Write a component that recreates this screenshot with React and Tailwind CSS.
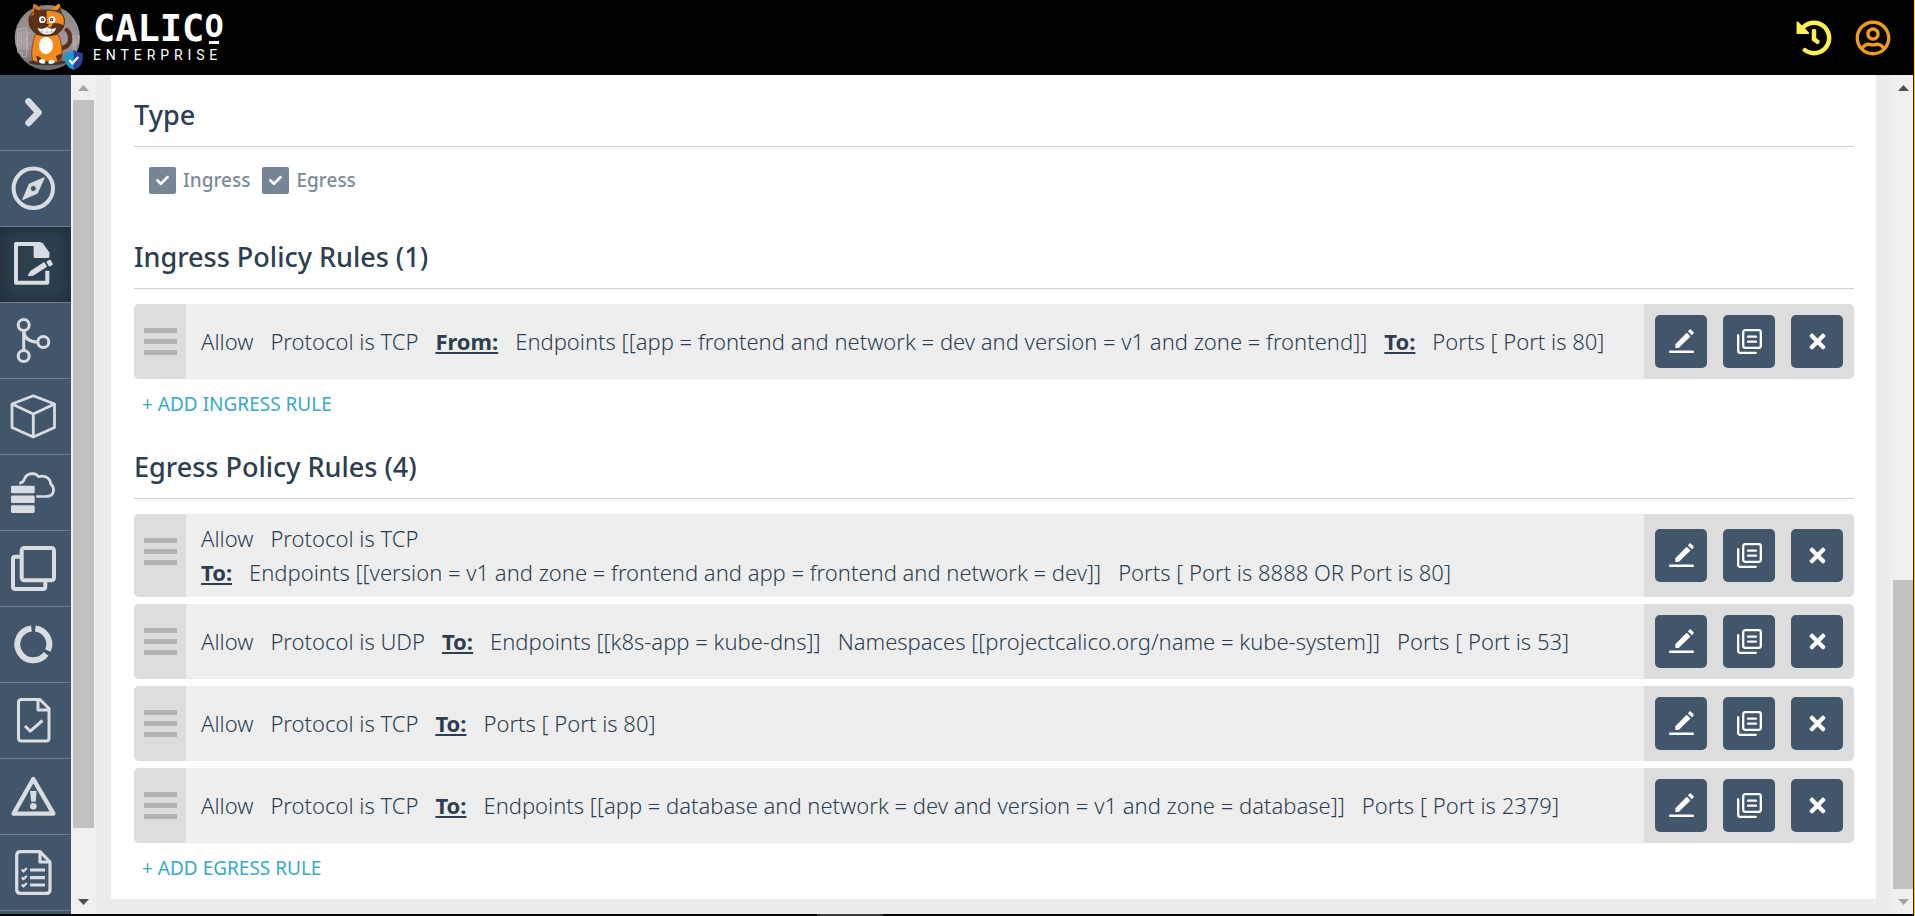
import { FaCheck, FaHistory, FaRegUserCircle, FaTimes } from "react-icons/fa";

function NavSvg({ children }) {
  return (
    <svg
      viewBox="0 0 48 48"
      className="size-12"
      fill="none"
      stroke="currentColor"
      strokeLinejoin="round"
      aria-hidden="true"
    >
      {children}
    </svg>
  );
}

const NAV_ITEMS = [
  {
    label: "Expand menu",
    icon: <path d="M19.5 12.5 29.5 23.5 19.5 34" strokeWidth="6.5" strokeLinecap="round" />,
  },
  {
    label: "Dashboard",
    icon: (
      <>
        <circle cx="24.3" cy="23.3" r="19.7" strokeWidth="4" />
        <path
          fill="currentColor"
          fillRule="evenodd"
          strokeWidth="1"
          d="M35.3 12.7 20.3 19 13.7 34.6 28.3 28.3ZM24.3 20.6a3 3 0 1 1 0 6 3 3 0 1 1 0-6Z"
        />
      </>
    ),
  },
  {
    label: "Policies",
    active: true,
    icon: (
      <>
        <path d="M26.5 3H7V41.7H38.3V29.7" strokeWidth="4" />
        <path
          fill="currentColor"
          stroke="none"
          d="M24.6 1H30.5Q32.5 1 34 2.5L40.4 11.5V16.5L39 17H26Q24.6 17 24.6 15.5Z"
        />
        <path
          fill="currentColor"
          strokeWidth="1"
          d="M19.3 34.6 21.6 30.2 35.2 21.6 37.6 25.6 24.3 34.2ZM37.8 20.8 41.2 19 43.6 23.4 40.3 25.2Z"
        />
      </>
    ),
  },
  {
    label: "Service graph",
    icon: (
      <g strokeWidth="3">
        <circle cx="14.7" cy="8" r="5.5" />
        <circle cx="14.7" cy="39" r="5.5" />
        <circle cx="34.3" cy="25" r="5.5" />
        <path d="M14.7 13.5V33.5M14.7 14C15.5 21.5 20 25 28.5 25" />
      </g>
    ),
  },
  {
    label: "Endpoints",
    icon: (
      <path
        strokeWidth="2.8"
        d="M24.3 2.7 45.5 11V34.5L24.3 44 3 34.5V11ZM3 11 24.3 21 45.5 11M24.3 21V44"
      />
    ),
  },
  {
    label: "Network sets",
    icon: (
      <>
        <g fill="currentColor" stroke="none">
          <rect x="2" y="16.7" width="23.7" height="7.6" rx="1.3" />
          <rect x="2" y="26.5" width="23.7" height="7.6" rx="1.3" />
          <rect x="2" y="36.3" width="23.7" height="7.6" rx="1.3" />
        </g>
        <path
          strokeWidth="2.7"
          d="M10.3 14.4Q14.5 13.5 15.5 9.8C17 5.8 20 4.7 24 4.7Q27.5 5 29.5 7.8Q33 6.5 36.5 7.8Q41.5 10 41.5 14.5Q45 18 44.5 22C44 26 41 27.5 37 27.5H27.3"
        />
      </>
    ),
  },
  {
    label: "Managed clusters",
    icon: (
      <g strokeWidth="4">
        <rect x="12.7" y="3" width="32.3" height="32.3" rx="2.5" />
        <path d="M11 11.7H6.5Q4 11.7 4 14V41.5Q4 44 6.5 44H34Q36.3 44 36.3 41.5V36" />
      </g>
    ),
  },
  {
    label: "Timeline",
    icon: (
      <path
        strokeWidth="6"
        d="M26.3 7.4A16 16 0 0 1 39 29.6M37.1 32.9A16 16 0 1 1 22.4 7.4"
      />
    ),
  },
  {
    label: "Compliance",
    icon: (
      <g strokeWidth="3">
        <path d="M12.5 2.5H31L40 11.5V41Q40 44 37 44H12.5Q9.5 44 9.5 41V5.5Q9.5 2.5 12.5 2.5ZM29 3V13H40" />
        <path d="M16 29 21.3 34.2 33.5 23.5" />
      </g>
    ),
  },
  {
    label: "Alerts",
    icon: (
      <>
        <path d="M24.3 6 4.6 40.6H44.4Z" strokeWidth="4.4" />
        <path fill="currentColor" stroke="none" d="M21 18H27.7L26.7 28.8H22.2Z" />
        <circle cx="24.3" cy="33.3" r="3.3" fill="currentColor" stroke="none" />
      </>
    ),
  },
  {
    label: "Reports",
    icon: (
      <>
        <path
          strokeWidth="3.2"
          d="M11.5 2.6H31L41 13V40.5Q41 44.4 37.5 44.4H11.5Q7.7 44.4 7.7 40.5V6.5Q7.7 2.6 11.5 2.6ZM31 3V13H41"
        />
        <path strokeWidth="3.2" d="M21 21H36M21 28.7H36M21 36H36" />
        <path
          strokeWidth="2.2"
          d="M12.8 20.5 14.5 22.5 17.8 19M12.8 28.2 14.5 30.2 17.8 26.7M12.8 35.5 14.5 37.5 17.8 34"
        />
      </>
    ),
  },
];

function CatLogo() {
  return (
    <svg viewBox="40 0 216 225" className="h-[75px] w-[72px]" aria-hidden="true">
      <defs>
        <linearGradient id="disc" x1="0" y1="0" x2="0" y2="1">
          <stop offset="0" stopColor="#8d8486" />
          <stop offset="0.6" stopColor="#9f9799" />
          <stop offset="1" stopColor="#6b6365" />
        </linearGradient>
        <clipPath id="head">
          <path d="M88 60C88 38 108 30 141 30S194 38 194 62C196 90 172 108 141 108S87 90 88 60ZM94 46 102 12Q104 9 110 14L132 32ZM188 46 180 12Q178 9 172 14L150 32Z" />
        </clipPath>
      </defs>
      <circle cx="143" cy="113" r="98" fill="url(#disc)" />
      <g fill="none" stroke="#c9c3c4" strokeWidth="2">
        <path d="M54 158V90L80 82V170H68V158ZM60 96V150M66 94V150M73 92V150M84 150V98H92M222 150V108H236V130M228 116V150" />
      </g>
      <ellipse cx="143" cy="187" rx="56" ry="9" fill="#3d3536" />
      <path d="M186 145Q214 138 211 112Q210 96 201 90" fill="none" stroke="#5a3118" strokeWidth="13" strokeLinecap="round" />
      <path d="M106 104Q92 150 98 178Q104 192 140 184Q178 192 186 176Q192 142 176 104Z" fill="#f58a1a" stroke="#5a2d10" strokeWidth="2" />
      <path d="M174 184Q188 178 187 160L168 168Z" fill="#5a3118" />
      <path d="M110 168Q120 166 134 186L114 187Z" fill="#5a3118" />
      <ellipse cx="139" cy="136" rx="21" ry="26" fill="#fff" />
      <path d="M118 186Q118 176 127 178Q136 176 137 190Q126 194 118 186ZM146 190Q146 178 156 179Q166 180 165 188Q154 194 146 190Z" fill="#fff" />
      <g clipPath="url(#head)">
        <rect x="80" y="0" width="62" height="115" fill="#5a3118" />
        <rect x="141" y="0" width="60" height="115" fill="#f58a1a" />
        <path d="M166 34Q182 28 184 8L200 20V54Q190 40 166 34Z" fill="#5a3118" />
        <path d="M160 70Q176 66 196 78V112H141V90Q156 84 160 70Z" fill="#5a3118" />
        <path d="M100 12Q108 8 130 32Q112 32 94 50Z" fill="#d9761b" />
        <path d="M103 24 120 34 104 42Z" fill="#5a3118" />
      </g>
      <path d="M88 60C88 38 108 30 141 30S194 38 194 62C196 90 172 108 141 108S87 90 88 60Z" fill="none" stroke="#4a2610" strokeWidth="3" />
      <circle cx="128" cy="59" r="10" fill="#fff" />
      <circle cx="157" cy="59" r="10" fill="#fff" />
      <circle cx="129" cy="59" r="5" fill="#222" />
      <circle cx="156" cy="59" r="5" fill="#222" />
      <circle cx="129" cy="59" r="2" fill="#fff" />
      <circle cx="156" cy="59" r="2" fill="#fff" />
      <path d="M136 72H149L142.500 79Z" fill="#222" />
      <path d="M112 82Q126 90 142 80Q158 90 171 82Q166 104 142 105Q118 104 112 82Z" fill="#fff" stroke="#4a2610" strokeWidth="2" />
      <path d="M117 94Q142 100 166 94M128 87V102M142 84V104M156 87V102" fill="none" stroke="#8b8b8b" strokeWidth="1.500" />
      <path d="M222 150Q234 160 248 159V180Q246 200 222 210Q198 200 196 180V159Q210 160 222 150Z" fill="#1b9ad6" />
      <path d="M222 150Q234 160 248 159V180Q246 200 222 210Z" fill="#2b3f96" />
      <path d="M209 180 218 190 236 171" fill="none" stroke="#fff" strokeWidth="7" />
    </svg>
  );
}

function Brand() {
  return (
    <a href="#home" className="flex items-center gap-2 pl-[13px] text-white">
      <CatLogo />
      <span className="flex flex-col pt-0.5">
        <span className="flex font-['DejaVu_Sans_Mono',monospace] text-[37px] leading-8 font-bold">
          CALIC
          <span className="flex flex-col items-center gap-0.5">
            <span className="text-[32px] leading-[26px]">O</span>
            <svg viewBox="0 0 10 3" className="h-[3px] w-[10px]" fill="currentColor" aria-hidden="true">
              <rect width="10" height="3" />
            </svg>
          </span>
        </span>
        <span className="font-['Roboto',sans-serif] text-sm leading-5 tracking-[0.35em]">ENTERPRISE</span>
      </span>
    </a>
  );
}

function Arrow({ up, muted }) {
  return (
    <svg viewBox="0 0 11 6" className={muted ? "h-1.5 w-[11px] text-[#a3a3a3]" : "h-1.5 w-[11px] text-[#505050]"} fill="currentColor" aria-hidden="true">
      <path d={up ? "M0 6 5.500 0 11 6Z" : "M0 0 5.500 6 11 0Z"} />
    </svg>
  );
}

function ScrollTrack({ before, thumb, after, upMuted, downMuted, className }) {
  return (
    <div aria-hidden="true" className={`flex shrink-0 flex-col bg-[#f0f0f0] ${className}`}>
      <div className="flex h-[25px] items-center justify-center"><Arrow up muted={upMuted} /></div>
      <div style={{ flexGrow: before }} />
      <div className="bg-[#c1c1c1]" style={{ flexGrow: thumb }} />
      <div style={{ flexGrow: after }} />
      <div className="flex h-[25px] items-center justify-center"><Arrow muted={downMuted} /></div>
    </div>
  );
}

function Heading({ children }) {
  return (
    <h2 className="border-b border-[#d0d3d3] pb-3.5 text-[27px] leading-[35px] font-medium">{children}</h2>
  );
}

function TypeCheckbox({ id, label }) {
  return (
    <div className="flex items-center gap-[7px]">
      <span className="grid size-[27px] place-items-center">
        <input id={id} type="checkbox" defaultChecked className="col-start-1 row-start-1 size-[27px] appearance-none rounded-xs bg-[#768696]" />
        <FaCheck className="pointer-events-none col-start-1 row-start-1 size-[13px] text-white" aria-hidden="true" />
      </span>
      <label htmlFor={id} className="text-[19px] leading-[27px] font-medium text-[#7b8b9b]">{label}</label>
    </div>
  );
}

function EditIcon() {
  return (
    <svg viewBox="0 0 25 25" className="size-[25px]" fill="currentColor" aria-hidden="true">
      <path d="M6.300 19V15.300L17.700 3.700 21.500 7.500 9.700 19ZM18.900 2.300 20.600 .600Q21.200 0 21.900 .600L24.600 3.300Q25 4 24.500 4.600L22.800 6.300ZM1 21.400H24Q25 21.500 25 22.700T24 24H1Q0 24 0 22.700T1 21.400Z" />
    </svg>
  );
}

function CopyIcon() {
  return (
    <svg viewBox="0 0 25 25" className="size-[25px]" fill="none" stroke="currentColor" strokeWidth="2.300" strokeLinecap="round" aria-hidden="true">
      <rect x="6.200" y="1.200" width="17.600" height="17.600" rx="2" />
      <path d="M11 7.700H19M11 12.700H19M1.200 6.200V21.800Q1.200 23.800 3.200 23.800H18.800" />
    </svg>
  );
}

function ActionButton({ label, children }) {
  return (
    <button type="button" aria-label={label} className="flex h-[53px] w-[52px] items-center justify-center rounded-[5px] bg-[#41566b] text-white">
      {children}
    </button>
  );
}

function Rule({ lines }) {
  return (
    <li className="flex min-h-[75px] overflow-hidden rounded-[5px] bg-[#eeeeee]">
      <div className="flex w-[52px] shrink-0 flex-col items-center gap-1.5 bg-[#dddddd] pt-6">
        <span className="h-[5px] w-[33px] bg-[#b3b3b3]" />
        <span className="h-[5px] w-[33px] bg-[#b3b3b3]" />
        <span className="h-[5px] w-[33px] bg-[#b3b3b3]" />
      </div>
      <div className="flex flex-1 flex-col justify-center pt-[7px] pb-2 pl-[15px] text-[22px] leading-[34px] font-light">
        {lines.map((parts, i) => (
          <p key={i} className="flex flex-wrap gap-x-[17px]">
            {parts.map((part) =>
              part.endsWith(":") ? (
                <span key={part} className="font-bold underline decoration-2 underline-offset-2">{part}</span>
              ) : (
                <span key={part}>{part}</span>
              ),
            )}
          </p>
        ))}
      </div>
      <div className="flex w-[210px] shrink-0 items-center justify-center gap-4 bg-[#dddddd]">
        <ActionButton label="Edit rule"><EditIcon /></ActionButton>
        <ActionButton label="Duplicate rule"><CopyIcon /></ActionButton>
        <ActionButton label="Delete rule"><FaTimes className="size-[23px]" aria-hidden="true" /></ActionButton>
      </div>
    </li>
  );
}

function RuleSection({ title, rules, action }) {
  return (
    <section>
      <Heading>{title}</Heading>
      <ul className="mt-[15px] flex flex-col gap-[7px]">
        {rules.map((lines, i) => <Rule key={i} lines={lines} />)}
      </ul>
      <button type="button" className="mt-[11px] ml-2 block text-[19px] leading-7 text-[#38a9c9]">{action}</button>
    </section>
  );
}

const INGRESS = [
  [["Allow", "Protocol is TCP", "From:", "Endpoints [[app = frontend and network = dev and version = v1 and zone = frontend]]", "To:", "Ports [ Port is 80]"]],
];

const EGRESS = [
  [
    ["Allow", "Protocol is TCP"],
    ["To:", "Endpoints [[version = v1 and zone = frontend and app = frontend and network = dev]]", "Ports [ Port is 8888 OR Port is 80]"],
  ],
  [["Allow", "Protocol is UDP", "To:", "Endpoints [[k8s-app = kube-dns]]", "Namespaces [[projectcalico.org/name = kube-system]]", "Ports [ Port is 53]"]],
  [["Allow", "Protocol is TCP", "To:", "Ports [ Port is 80]"]],
  [["Allow", "Protocol is TCP", "To:", "Endpoints [[app = database and network = dev and version = v1 and zone = database]]", "Ports [ Port is 2379]"]],
];

export default function App() {
  return (
    <div className="flex min-h-screen flex-col border-r border-[#f5d400] bg-[#ececec] font-['Noto_Sans',sans-serif] text-[#2c3e50]">
      <header className="flex h-[75px] shrink-0 items-center justify-between bg-black">
        <Brand />
        <div className="flex items-center gap-[23px] pr-[23px]">
          <button type="button" aria-label="History" className="text-[#fff152]"><FaHistory className="size-9" /></button>
          <button type="button" aria-label="Account" className="text-[#f29a1f]"><FaRegUserCircle className="size-9" /></button>
        </div>
      </header>

      <div className="flex flex-1 border-r border-[#222222]">
        <nav className="w-[71px] shrink-0 bg-[#41566b] text-[#d9dce0]">
          {NAV_ITEMS.map(({ label, icon, active }) => (
            <a
              key={label}
              href="#nav"
              aria-label={label}
              className={
                active
                  ? "flex h-[76px] items-center border-b border-[#6e7f8f] bg-[#2b3f4f] pl-[9px] shadow-[inset_0_0_16px_#1b2733]"
                  : "flex h-[76px] items-center border-b border-[#6e7f8f] pl-[9px]"
              }
            >
              <NavSvg>{icon}</NavSvg>
            </a>
          ))}
        </nav>
        <ScrollTrack className="w-[25px] px-0.5" before={0} thumb={728} after={61} upMuted />

        <main className="flex-1 px-[15px] pb-3.5">
          <div className="bg-white pt-[22px] pr-[22px] pb-[17px] pl-[23px]">
            <section>
              <Heading>Type</Heading>
              <div className="mt-5 flex gap-3 pl-[15px]">
                <TypeCheckbox id="ingress" label="Ingress" />
                <TypeCheckbox id="egress" label="Egress" />
              </div>
            </section>
            <div className="mt-[45px] flex flex-col gap-[31px]">
              <RuleSection title="Ingress Policy Rules (1)" rules={INGRESS} action="+ ADD INGRESS RULE" />
              <RuleSection title="Egress Policy Rules (4)" rules={EGRESS} action="+ ADD EGRESS RULE" />
            </div>
          </div>
        </main>
        <ScrollTrack className="w-[22px] pl-0.5" before={481} thumb={309} after={0} downMuted />
      </div>

      <div aria-hidden="true" className="flex h-0.5 justify-center bg-black pr-[214px]">
        <span className="w-[66px] bg-[#3a3a3a]" />
      </div>
    </div>
  );
}
